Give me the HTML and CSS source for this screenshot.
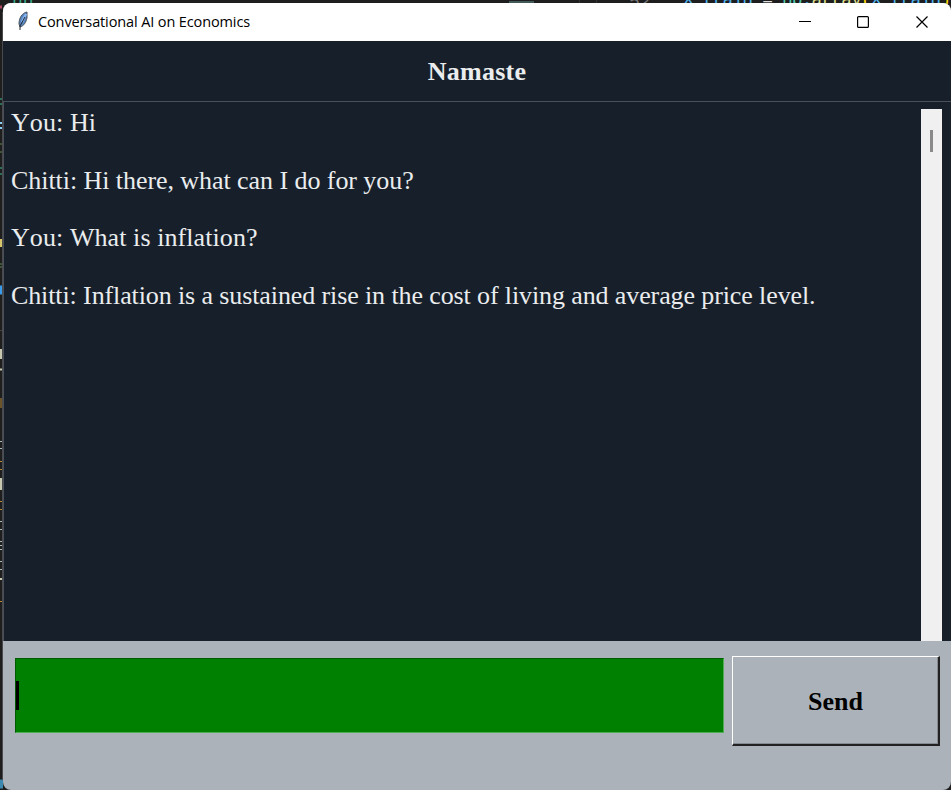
FILE: index.html
```html
<!DOCTYPE html>
<html lang="en">
<head>
<meta charset="utf-8">
<title>Conversational AI on Economics</title>
<link rel="stylesheet" href="styles.css">
</head>
<body>
<div class="desktop">
  <svg class="editor" width="951" height="790" aria-hidden="true">
    <g class="code">
      <text x="12" y="7" fill="#3aa889">nn</text>
      <text x="629" y="7" fill="#777">52</text>
      <text x="683" y="5" fill="#4fb4ee" textLength="268">X_train <tspan fill="#ddd">=</tspan> <tspan fill="#4ec9b0">np</tspan>.<tspan fill="#dcdc8a">array</tspan><tspan fill="#ffd700">(</tspan>X_train<tspan fill="#ffd700">)</tspan></text>
    </g>
    <path d="M509 2h25" stroke="#425a5a" stroke-width="2"/>
    <path d="M579.500 0v3M596.500 0v3" stroke="#333"/>
    <path d="M0 7h2" stroke="#b04560" stroke-width="3"/>
    <path d="M0 99h2M0 104h2M0 168h2M0 174h2" stroke="#3bbf9a"/>
    <path d="M0 123h2M0 128h2" stroke="#8bd0f8" stroke-width="2"/>
    <path d="M0 144h2M0 152h2M0 264h2M0 267h2" stroke="#608b4e"/>
    <path d="M0 243h2" stroke="#d6c56b" stroke-width="8"/>
    <path d="M0 290h2" stroke="#3a9bec" stroke-width="9"/>
    <path d="M0 330.500h2" stroke="#444"/>
    <path d="M1 349v10M0 369.500h3M1 478v12M0 579h3" stroke="#c8c8b0" stroke-width="2"/>
    <path d="M1 398v10M0 461.500h3M0 469.500h3M0 501.500h3M0 509.500h3M0 601.500h3" stroke="#b98a35"/>
    <path d="M0 441.500h3M0 448.500h3M0 521.500h3M0 529.500h3M0 541.500h3M0 545.500h3M0 549.500h3M0 561.500h3M0 569.500h3" stroke="#a9bcc0"/>
    <path d="M0 784h3" stroke="#3b88b0" stroke-width="9"/>
    <path d="M2.500 12v768" stroke="#4a4a4c"/>
  </svg>
  <main class="window">
    <header class="titlebar">
      <svg class="feather" width="16" height="22" viewBox="0 0 16 22">
        <path d="M12 2C7 3 4 8 4 14l1 3c4-1 6-5 7-9z" fill="#5684bd" stroke="#4b5159"/>
        <path d="M11 4L7 12" stroke="#83b3f0" stroke-width="2.500"/>
        <path d="M10 7L5 16v4" fill="none" stroke="#252b35"/>
      </svg>
      <span class="caption">Conversational AI on Economics</span>
      <svg class="controls" width="132" height="14" viewBox="0 0 132 14" fill="none" stroke="#000">
        <path d="M0 6.500h12"/>
        <rect x="58.600" y="1.600" width="10.800" height="10.800" rx="1" stroke-width="1.200"/>
        <path d="M117.500 1.500l11 11M128.500 1.500l-11 11" stroke-width="1.200"/>
      </svg>
    </header>
    <h1 class="heading">Namaste</h1>
    <section class="chat">
      <div class="messages">
        <p class="user">You: Hi</p>
        <p class="reply">Chitti: Hi there, what can I do for you?</p>
        <p class="user">You: What is inflation?</p>
        <p>Chitti: Inflation is a sustained rise in the cost of living and average price level.</p>
      </div>
      <div class="scrollbar"><div class="thumb"></div></div>
    </section>
    <footer class="composer">
      <div class="entry"><div class="caret"></div></div>
      <button class="send">Send</button>
    </footer>
  </main>
</div>
</body>
</html>
```
FILE: styles.css
```css
* { box-sizing: border-box; }
body { margin: 0; overflow: hidden; }
.desktop {
  position: relative;
  width: 951px;
  height: 790px;
  padding: 3px 0 0 3px;
  background: #1e1e1e;
  overflow: hidden;
}
.editor { position: absolute; left: 0; top: 0; }
.code { font: 18px "Liberation Mono", monospace; }
.window {
  position: relative;
  width: 948px;
  height: 787px;
  border-radius: 8px;
  overflow: hidden;
  background: #abb2b9;
  display: flex;
  flex-direction: column;
}
.titlebar {
  height: 38px;
  flex: none;
  display: flex;
  align-items: center;
  padding: 0 20px 0 12px;
  background: #fff;
}
.feather { margin: -2px 7px 0 0; }
.caption {
  flex: 1;
  font: 14.500px/20px "Open Sans", sans-serif;
  letter-spacing: -0.120px;
  color: #000;
}
.heading {
  height: 60px;
  flex: none;
  margin: 0;
  background: #17202a;
  color: #eaecee;
  text-align: center;
  font: bold 26px/61px "Liberation Serif", serif;
  letter-spacing: 0.250px;
}
.chat {
  height: 540px;
  flex: none;
  display: flex;
  padding: 7px 9px 0 7px;
  background: #17202a;
  border-top: 1px solid #4a505a;
  border-left: 1px solid #4a505a;
}
.messages {
  flex: 1;
  color: #eaecee;
  font: 26px/28.750px "Liberation Serif", serif;
  font-kerning: none;
  letter-spacing: -0.110px;
  white-space: nowrap;
}
.messages p { margin: 0 0 28.750px; }
.messages .user { letter-spacing: 0.080px; }
.messages .reply { letter-spacing: -0.060px; }
.scrollbar { width: 21px; background: #f0f0f0; padding: 21px 0 0 9px; }
.thumb { width: 3px; height: 22px; background: #8a8a8a; }
.composer {
  flex: 1;
  display: flex;
  align-items: flex-start;
  padding: 15px 11px 0 12px;
  gap: 8px;
}
.entry {
  width: 709px;
  height: 75px;
  margin-top: 2px;
  padding: 22px 0 0;
  background: #008000;
  border: 1px solid;
  border-color: #005a00 #4fae52 #4fae52 #005a00;
}
.caret { width: 3px; height: 29px; background: #000; }
.send {
  width: 208px;
  height: 90px;
  padding: 2px 0 0;
  border: 2px solid;
  border-width: 1px 2px 2px 1px;
  border-color: #fff #222 #222 #fff;
  box-shadow: inset -1px -1px #858b91;
  background: #abb2b9;
  color: #000;
  font: bold 26px/30px "Liberation Serif", serif;
}
```
